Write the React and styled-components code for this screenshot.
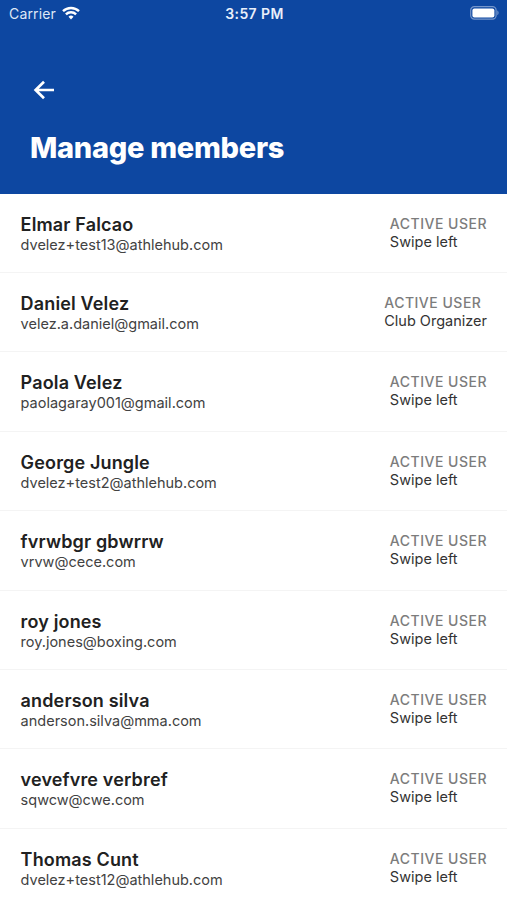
import React from 'react';
import styled, { createGlobalStyle } from 'styled-components';

const GlobalStyle = createGlobalStyle`
  * {
    box-sizing: border-box;
  }
  body {
    margin: 0;
    background: #ffffff;
    font-family: Inter, 'Liberation Sans', sans-serif;
  }
`;

const Screen = styled.div`
  display: flex;
  flex-direction: column;
  width: 100%;
  height: 900px;
  overflow: hidden;
  background: #ffffff;
`;

const Header = styled.header`
  flex: none;
  height: 193.6px;
  background: #0d47a1;
  color: #ffffff;
`;

const StatusBar = styled.div`
  display: grid;
  grid-template-columns: 1fr auto 1fr;
  align-items: center;
  height: 27px;
  padding: 0 7px 0 9px;
  font-size: 14px;
  line-height: 27px;
`;

const Carrier = styled.div`
  display: flex;
  align-items: center;
  gap: 6px;
  letter-spacing: 0.15px;
  color: #dfe8f6;
`;

const Clock = styled.div`
  font-weight: 600;
  letter-spacing: 0.4px;
  color: #e8effa;
`;

const BatteryIcon = styled.svg`
  justify-self: end;
  margin-top: -1px;
`;

const WifiIcon = styled.svg`
  margin-top: -2px;
`;

const BackButton = styled.button`
  display: block;
  margin: 53px 0 0 33px;
  padding: 0;
  border: 0;
  background: none;
  width: 22px;
  height: 20px;
  color: inherit;
`;

const Title = styled.h1`
  margin: 30px 0 0 30px;
  font-size: 29px;
  line-height: 36px;
  font-weight: 800;
  letter-spacing: -0.28px;
`;

const MemberList = styled.ul`
  flex: none;
  margin: 0;
  padding: 0;
  list-style: none;
`;

const MemberRow = styled.li`
  display: flex;
  justify-content: space-between;
  height: 79.4px;
  padding: 20px 20px 0 20.6px;
  border-bottom: 1px solid #f4f4f4;
`;

const Name = styled.div`
  font-size: 18px;
  line-height: 22px;
  font-weight: 600;
  letter-spacing: 0.15px;
  color: #212121;
`;

const Email = styled.div`
  font-size: 14.5px;
  line-height: 18px;
  color: #424242;
`;

const Status = styled.div`
  margin-top: 1px;
  font-size: 14px;
  line-height: 18px;
  font-weight: 500;
  letter-spacing: 0.5px;
  text-transform: uppercase;
  color: #7c7c7c;
`;

const Role = styled.div`
  font-size: 14.5px;
  line-height: 18px;
  color: #333333;
`;

const members = [
  { name: 'Elmar Falcao', email: 'dvelez+test13@athlehub.com' },
  { name: 'Daniel Velez', email: 'velez.a.daniel@gmail.com', role: 'Club Organizer' },
  { name: 'Paola Velez', email: 'paolagaray001@gmail.com' },
  { name: 'George Jungle', email: 'dvelez+test2@athlehub.com' },
  { name: 'fvrwbgr gbwrrw', email: 'vrvw@cece.com' },
  { name: 'roy jones', email: 'roy.jones@boxing.com' },
  { name: 'anderson silva', email: 'anderson.silva@mma.com' },
  { name: 'vevefvre verbref', email: 'sqwcw@cwe.com' },
  { name: 'Thomas Cunt', email: 'dvelez+test12@athlehub.com' },
];

const Member = ({ name, email, role = 'Swipe left' }) => (
  <MemberRow>
    <div>
      <Name>{name}</Name>
      <Email>{email}</Email>
    </div>
    <div>
      <Status>Active user</Status>
      <Role>{role}</Role>
    </div>
  </MemberRow>
);

const App = () => (
  <Screen>
    <GlobalStyle />
    <Header>
      <StatusBar>
        <Carrier>
          Carrier
          <WifiIcon width='18' height='14' viewBox='0 0 18 14' fill='none' stroke='#fff' strokeWidth='2.4'>
            <path d='M1 5.2a11.5 11.5 0 0 1 16 0' />
            <path d='M3.9 8.3a7.3 7.3 0 0 1 10.2 0' />
            <path d='M9 13.6l-2.5-2.8a3.6 3.6 0 0 1 5 0z' fill='#fff' stroke='none' />
          </WifiIcon>
        </Carrier>
        <Clock>3:57 PM</Clock>
        <BatteryIcon width='30' height='14' viewBox='0 0 30 14'>
          <rect x='0.7' y='0.7' width='25.4' height='12.4' rx='3.6' fill='none' stroke='#7596cb' strokeWidth='1.2' />
          <rect x='2.4' y='2.4' width='22' height='9' rx='2' fill='#fff' />
          <path d='M27.3 4.6c1.7.7 1.7 4 0 4.7z' fill='#7596cb' />
        </BatteryIcon>
      </StatusBar>
      <BackButton aria-label='Back'>
        <svg width='22' height='20' viewBox='0 0 22 20' fill='none' stroke='#fff' strokeWidth='2.7'>
          <path d='M21 10H3M11 1.7L2.6 10l8.4 8.3' />
        </svg>
      </BackButton>
      <Title>Manage members</Title>
    </Header>
    <MemberList>
      {members.map((member) => (
        <Member key={member.email} {...member} />
      ))}
    </MemberList>
  </Screen>
);

export default App;
